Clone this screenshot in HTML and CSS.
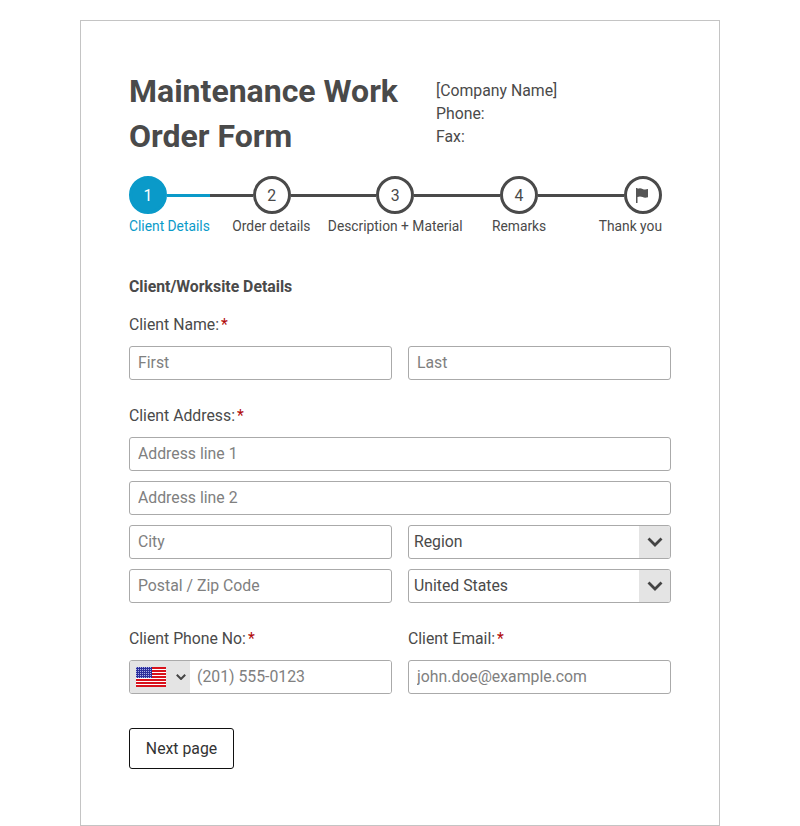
FILE: index.html
```html
<!DOCTYPE html>
<html lang="en">
<head>
    <meta charset="UTF-8">
    <title>Maintenance Work Order Form</title>
    <link rel="stylesheet" href="styles.css">
</head>
<body>
    <div class="form-card">
        <!-- Title and company details -->
        <div class="form-header">
            <h1>Maintenance Work Order Form</h1>
            <div class="company">
                <div>[Company Name]</div>
                <div>Phone:</div>
                <div>Fax:</div>
            </div>
        </div>

        <!-- Progress steps -->
        <div class="steps">
            <div class="step-circle active">1</div>
            <div class="step-line first"></div>
            <div class="step-circle">2</div>
            <div class="step-line"></div>
            <div class="step-circle">3</div>
            <div class="step-line"></div>
            <div class="step-circle">4</div>
            <div class="step-line"></div>
            <div class="step-circle">
                <svg width="18" height="18" viewBox="0 0 18 18"><path d="M2 2h1.500v15H2z M3.500 2.800c2-.9 3.700-.6 5.100.1 1.400.7 3 .9 5.400.2v8.200c-2.400.7-4 .5-5.400-.2-1.400-.7-3.100-1-5.100-.1z" fill="#555"/></svg>
            </div>
        </div>
        <div class="step-labels">
            <span class="active">Client Details</span>
            <span>Order details</span>
            <span>Description + Material</span>
            <span>Remarks</span>
            <span>Thank you</span>
        </div>

        <!-- Client section -->
        <div class="section-title">Client/Worksite Details</div>

        <label class="field-label">Client Name:<span class="req">*</span></label>
        <div class="row">
            <input type="text" placeholder="First">
            <input type="text" placeholder="Last">
        </div>

        <label class="field-label spaced">Client Address:<span class="req">*</span></label>
        <div class="stack">
            <input type="text" placeholder="Address line 1">
            <input type="text" placeholder="Address line 2">
            <div class="row">
                <input type="text" placeholder="City">
                <div class="select-box">
                    <span class="select-value">Region</span>
                    <span class="select-arrow">
                        <svg width="16" height="10" viewBox="0 0 16 10"><path d="M1.500 1.500 8 8l6.500-6.500" fill="none" stroke="#444" stroke-width="2.800"/></svg>
                    </span>
                </div>
            </div>
            <div class="row">
                <input type="text" placeholder="Postal / Zip Code">
                <div class="select-box">
                    <span class="select-value">United States</span>
                    <span class="select-arrow">
                        <svg width="16" height="10" viewBox="0 0 16 10"><path d="M1.500 1.500 8 8l6.500-6.500" fill="none" stroke="#444" stroke-width="2.800"/></svg>
                    </span>
                </div>
            </div>
        </div>

        <div class="row contact-labels">
            <label class="field-label">Client Phone No:<span class="req">*</span></label>
            <label class="field-label">Client Email:<span class="req">*</span></label>
        </div>
        <div class="row">
            <div class="phone-box">
                <span class="flag-picker">
                    <svg class="flag" width="30" height="20" viewBox="0 0 30 20">
                        <defs>
                            <pattern id="stars" width="2" height="2" patternUnits="userSpaceOnUse">
                                <rect width="2" height="2" fill="#2c2f9c"/>
                                <rect width="1" height="1" fill="#aab0e6"/>
                            </pattern>
                        </defs>
                        <rect width="30" height="20" fill="#fff"/>
                        <path d="M0 0h30v2H0zM0 3h30v2H0zM0 6h30v2H0zM0 9h30v2H0zM0 12h30v2H0zM0 15h30v2H0zM0 18h30v2H0z" fill="#d8121c"/>
                        <rect width="16" height="11" fill="url(#stars)"/>
                    </svg>
                    <svg width="10" height="6" viewBox="0 0 10 6"><path d="M.8.800 5 5l4.200-4.200" fill="none" stroke="#444" stroke-width="2"/></svg>
                </span>
                <input type="text" placeholder="(201) 555-0123">
            </div>
            <input type="text" placeholder="john.doe@example.com">
        </div>

        <button class="next-btn">Next page</button>
    </div>
</body>
</html>
```

FILE: styles.css
```css
* {
    box-sizing: border-box;
}

body {
    margin: 0;
    padding-top: 20px;
    background-color: #fff;
    font-family: Roboto, sans-serif;
    font-size: 15.8px;
    color: #4a4a4a;
}

.form-card {
    width: 640px;
    margin: 0 auto;
    padding: 48px 48px 56px;
    border: 1px solid #c4c4c4;
}

.form-header {
    display: flex;
}

.form-header h1 {
    width: 307px;
    margin: 0;
    font-size: 32px;
    font-weight: 700;
    line-height: 45px;
}

.company {
    padding-top: 10px;
    line-height: 23px;
}

/* Steps */
.steps {
    display: flex;
    align-items: center;
    width: 532.5px;
    margin-top: 17px;
}

.step-circle {
    display: flex;
    align-items: center;
    justify-content: center;
    flex: none;
    width: 38px;
    height: 38px;
    border: 3px solid #4a4a4a;
    border-radius: 50%;
}

.step-circle.active {
    background-color: #0a9ac9;
    border-color: #0a9ac9;
    color: #fff;
}

.step-line {
    flex: 1;
    height: 3px;
    background-color: #4a4a4a;
}

.step-line.first {
    background: linear-gradient(to right, #0a9ac9 43px, #4a4a4a 43px);
}

.step-labels {
    display: grid;
    grid-template-columns: 80.5px repeat(3, minmax(0, 1fr)) 81px;
    width: 533px;
    margin-top: 2px;
    font-size: 13.8px;
    line-height: 20px;
    white-space: nowrap;
}

.step-labels span {
    justify-self: center;
}

.step-labels span:first-child {
    justify-self: start;
}

.step-labels span:last-child {
    justify-self: end;
}

.step-labels .active {
    color: #0a9ac9;
}

/* Form fields */
.section-title {
    margin-top: 41px;
    font-weight: 700;
    line-height: 20px;
}

.field-label {
    display: block;
    margin-top: 18px;
    margin-bottom: 11px;
    line-height: 20px;
}

.field-label.spaced {
    margin-top: 26px;
    margin-bottom: 11px;
}

.req {
    margin-left: 2px;
    color: #b00a0a;
}

.row {
    display: grid;
    grid-template-columns: 1fr 1fr;
    gap: 16px;
}

.stack {
    display: flex;
    flex-direction: column;
    gap: 10px;
}

.contact-labels .field-label {
    margin-top: 26px;
    margin-bottom: 11px;
}

input {
    width: 100%;
    height: 34px;
    padding: 0 8px 2px;
    border: 1px solid #aaa;
    border-radius: 3px;
    font-family: Roboto, sans-serif;
    font-size: 15.8px;
    color: #4a4a4a;
}

input::placeholder {
    color: #808080;
    opacity: 1;
}

.select-box {
    display: flex;
    height: 34px;
    overflow: hidden;
    border: 1px solid #aaa;
    border-radius: 3px;
}

.select-value {
    flex: 1;
    padding-left: 5px;
    line-height: 32px;
}

.select-arrow {
    display: flex;
    align-items: center;
    justify-content: center;
    width: 31px;
    background-color: #e4e4e4;
}

.phone-box {
    display: flex;
    height: 34px;
    overflow: hidden;
    border: 1px solid #aaa;
    border-radius: 3px;
}

.phone-box input {
    flex: 1;
    min-width: 0;
    height: 32px;
    padding-left: 7px;
    border: none;
    border-radius: 0;
}

.flag-picker {
    display: flex;
    align-items: center;
    flex: none;
    width: 60px;
    padding-left: 6px;
    background-color: #e4e4e4;
}

.flag {
    margin-right: 10px;
}

.next-btn {
    display: block;
    width: 105px;
    height: 41px;
    margin-top: 34px;
    background-color: #fff;
    border: 1px solid #111;
    border-radius: 3px;
    font-family: Roboto, sans-serif;
    font-size: 15.8px;
    color: #333;
}
```
